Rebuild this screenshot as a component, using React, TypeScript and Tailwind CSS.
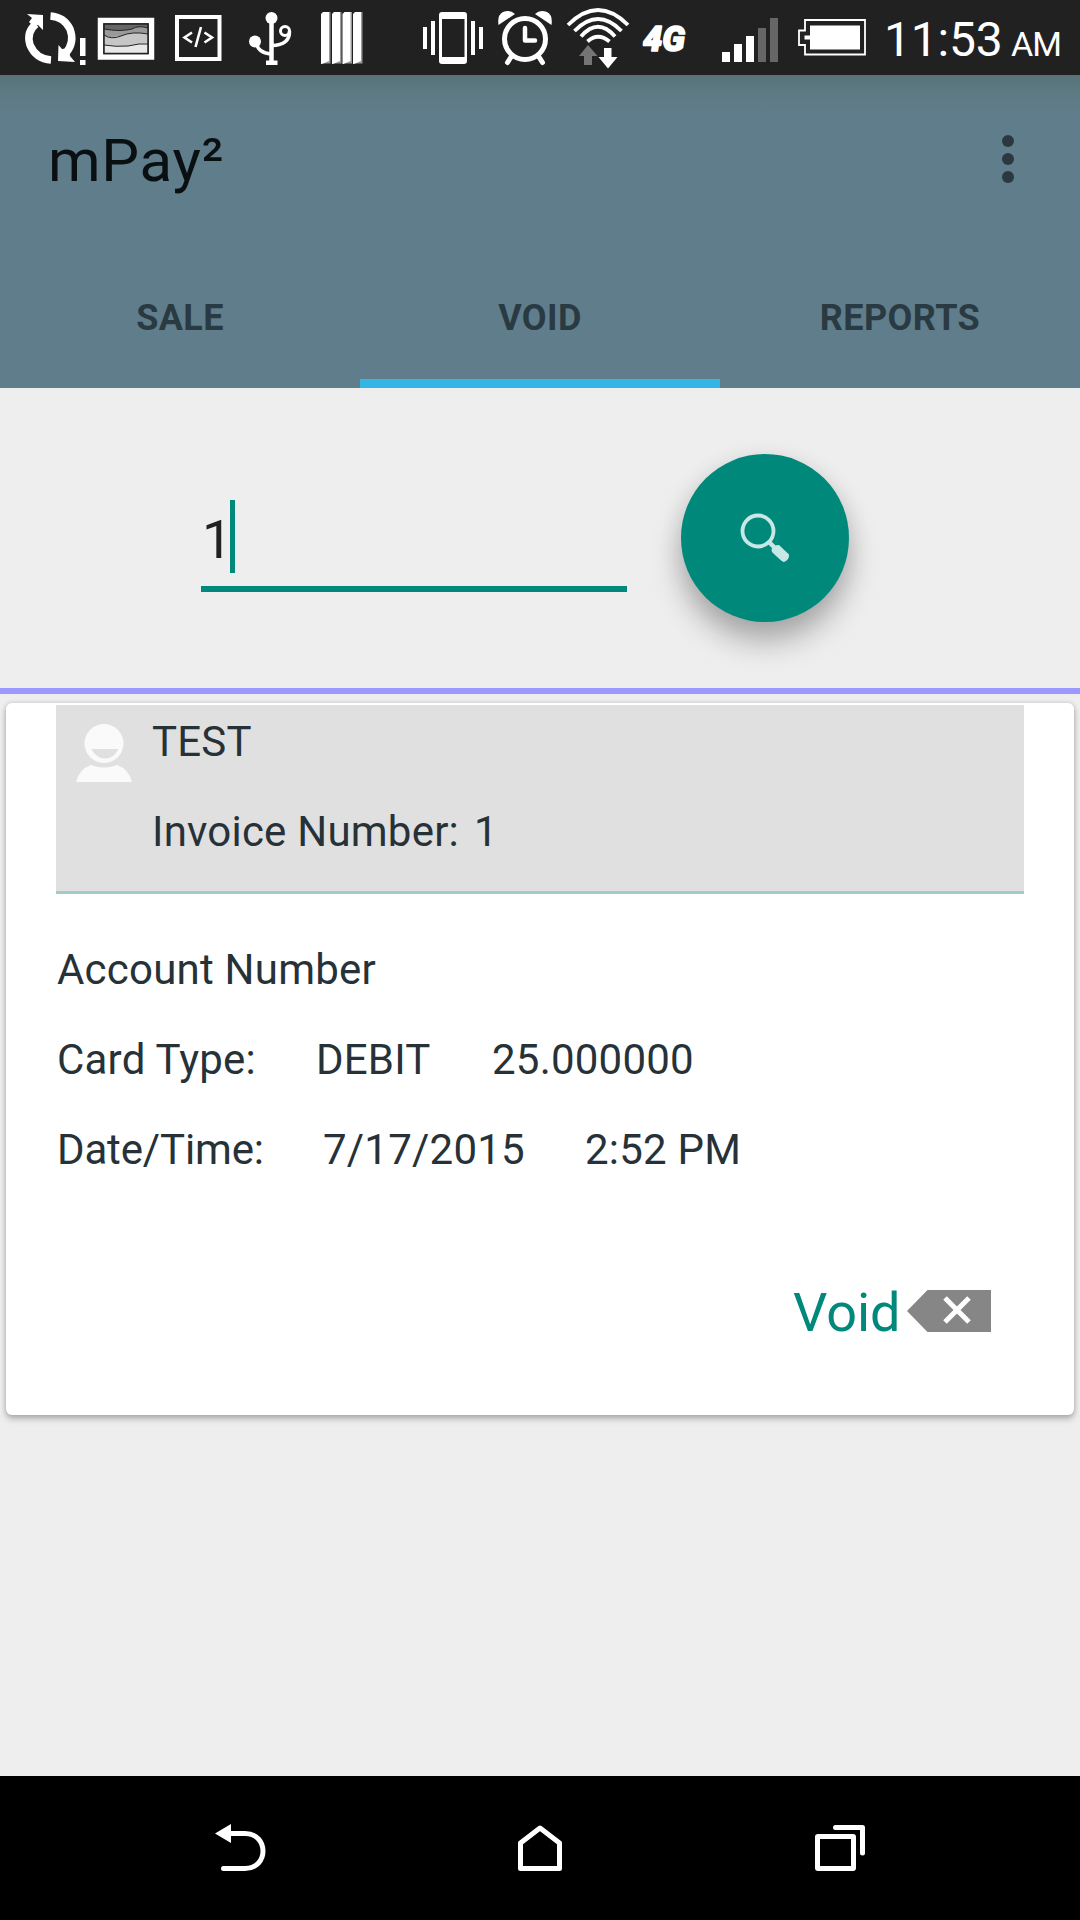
import React from "react";

type GlyphProps = { x: number; w: number; children: React.ReactNode };

/* One slot of the status bar; drawings use the bar's own coordinates. */
function Slot({ x, w, children }: GlyphProps) {
  return (
    <svg className="h-[75px] shrink-0" width={w} height={75} viewBox={`${x} 0 ${w} 75`} fill="none">
      {children}
    </svg>
  );
}

function StatusBar() {
  return (
    <div className="flex h-[75px] w-full bg-[#212121]">
      <Slot x={0} w={92}>
        <path d="M36 24 Q26 32 30 45 Q36 59 51 60" stroke="#fff" strokeWidth="7.5" />
        <path d="M27 14 L43 15 L43 30 L38 25 L33 26 L29 22 L32 18 Z" fill="#fff" />
        <path d="M50.500 16 Q64 17 70 29 Q75 42 66 53" stroke="#fff" strokeWidth="7.5" />
        <path d="M58.500 45 L62 49 L69 48 L70 56 L75 62 L58 61 Z" fill="#fff" />
        <path d="M80 38 H85.500 V56 H80 Z M80 60 H85.500 V65 H80 Z" fill="#fff" />
      </Slot>
      <Slot x={92} w={76}>
        <rect x="100.500" y="20.500" width="51" height="36.500" stroke="#fff" strokeWidth="5.500" />
        <rect x="104" y="24" width="44" height="29.500" fill="#e8e8e8" />
        <path d="M104 24 H148 V28 Q138 25 132 29 Q120 32 104 29 Z" fill="#666" />
        <path d="M104 29 Q120 32 132 29 Q138 25 148 28 V34 Q132 32 121 36 Q110 38 104 36 Z" fill="#999" />
        <path d="M104 36 Q112 39 121 36 Q132 31 148 34 V43 Q136 44 128 46 Q116 46 104 45 Z" fill="#c6c6c6" />
        <path d="M104 29 Q120 32 132 29 Q138 25 148 28 M104 35 Q111 40 121 36 Q132 31 148 34 M104 45 Q116 47 128 46 Q140 43 148 44" stroke="#222" strokeWidth="1" />
        <rect x="104" y="24" width="44" height="29.500" stroke="#222" strokeWidth="1.500" />
      </Slot>
      <Slot x={168} w={66}>
        <rect x="177" y="17" width="42.500" height="42" stroke="#fff" strokeWidth="4" />
        <path d="M192 32.500 L184.500 37.500 L192 42.500 M204.500 32.500 L212 37.500 L204.500 42.500 M201 27 L195.500 47" stroke="#fff" strokeWidth="2.600" />
      </Slot>
      <Slot x={234} w={70}>
        <circle cx="271.500" cy="18" r="6" fill="#fff" />
        <circle cx="255" cy="41.500" r="6" fill="#fff" />
        <circle cx="285" cy="31" r="4.500" stroke="#fff" strokeWidth="3" />
        <path d="M271.500 20 V61" stroke="#fff" strokeWidth="4.500" />
        <path d="M256.500 43 Q258 53 271 54 M289.500 31 Q290 45 272 45.500" stroke="#fff" strokeWidth="3.500" />
        <path d="M266 60.500 H277.500 V65 H266 Z" fill="#fff" />
      </Slot>
      <Slot x={304} w={96}>
        {[321, 332, 342.5, 353].map((x) => (
          <g key={x}>
            <path d={`M${x + 2} 12 H${x + 9.5} V63.500 H${x + 2} Z`} fill="#999" />
            <path d={`M${x} 14 L${x + 2} 12 H${x + 8} V61 L${x + 1} 64 H${x} Z`} fill="#fff" />
          </g>
        ))}
      </Slot>
      <Slot x={400} w={90}>
        <path d="M423 27 H427 V49 H423 Z M431 21 H435 V55 H431 Z M471 21 H475 V55 H471 Z M479 27 H483 V49 H479 Z" fill="#fff" />
        <path fillRule="evenodd" d="M442 12 H464 Q467 12 467 15 V61 Q467 64 464 64 H442 Q439 64 439 61 V15 Q439 12 442 12 Z M442 19 V57 H464.500 V19 Z" fill="#fff" />
      </Slot>
      <Slot x={490} w={70}>
        <circle cx="525" cy="39" r="20.500" stroke="#fff" strokeWidth="5" />
        <path d="M498.500 25 Q497 15 503 12 Q510 9 515 14 Z M551.500 25 Q553 15 547 12 Q540 9 535 14 Z" fill="#fff" />
        <path d="M525 28 V40.500 H535" stroke="#fff" strokeWidth="4.500" strokeLinecap="round" strokeLinejoin="round" />
        <path d="M511 57 L507.500 62.500 M539 57 L542.500 62.500" stroke="#fff" strokeWidth="5" strokeLinecap="round" />
      </Slot>
      <Slot x={560} w={75}>
        <path d="M568 25 Q598 -5 628 25 M574.500 31 Q598 7 621.500 31 M581 36.500 Q598 17 615 36.500 M587.500 41.500 Q598 32 609.500 41.500" stroke="#fff" strokeWidth="3.800" />
        <path d="M588 45 L597.500 56 H592 V65 H584 V56 H579 Z" fill="#757575" />
        <path d="M604 48 H611.500 V57 H617.500 L608 68.500 L598.500 57 H604 Z" fill="#fff" />
      </Slot>
      <Slot x={635} w={75}>
        <text x="643" y="50.500" textLength="42" lengthAdjust="spacingAndGlyphs" fontSize="35" fontStyle="italic" fontWeight="900" fill="#fff" stroke="#fff" strokeWidth="1.600" strokeLinejoin="round" fontFamily="Roboto, sans-serif">4G</text>
      </Slot>
      <Slot x={710} w={80}>
        <path d="M722 52 H730 V62 H722 Z M734 44 H742 V62 H734 Z M746 36 H754 V62 H746 Z" fill="#fff" />
        <path d="M758 28 H766 V62 H758 Z M770 18 H778 V62 H770 Z" fill="#666" />
      </Slot>
      <Slot x={790} w={92}>
        <path d="M805 20 H865 V54.500 H805 V45 H799 V30.500 H805 Z" stroke="#fff" strokeWidth="1.800" />
        <path d="M810 25.500 H860 V49.500 H810 V39.500 H804.500 V35.500 H810 Z" fill="#fff" />
      </Slot>
      <div className="flex h-[75px] items-baseline pl-[2px] text-white">
        <span className="w-[127px] whitespace-nowrap pt-[10px] text-[48px] leading-[60px] tracking-[-0.2px]">11:53</span>
        <span className="text-[34px] font-normal leading-none tracking-[-1px]">AM</span>
      </div>
    </div>
  );
}

function Header() {
  const tabs = ["SALE", "VOID", "REPORTS"];
  return (
    <header className="flex h-[313px] flex-col bg-[linear-gradient(#577278_0px,#5d7a84_18px,#607d8b_40px)]">
      <div className="flex h-[168px] items-center justify-between pl-12 pr-[66px]">
        <h1 className="pt-[3px] text-[60px] leading-[70px] tracking-[0.7px] text-[#0a0f12]">mPay²</h1>
        <div className="flex flex-col gap-[6px]">
          <span className="size-3 rounded-full bg-[#2b383f]" />
          <span className="size-3 rounded-full bg-[#2b383f]" />
          <span className="size-3 rounded-full bg-[#2b383f]" />
        </div>
      </div>
      <nav className="grid grow grid-cols-3">
        {tabs.map((t) => (
          <div
            key={t}
            className={
              "flex items-center justify-center border-b-[9px] pt-[13px] text-[36px] font-bold leading-none tracking-[0.4px] text-[#2a3a43] " +
              (t === "VOID" ? "border-[#33b5e5]" : "border-transparent")
            }
          >
            {t}
          </div>
        ))}
      </nav>
    </header>
  );
}

function SearchPanel() {
  return (
    <section className="flex h-[306px] items-start border-b-[6px] border-[#9999ff] pl-[201px] pt-[66px]">
      <div className="mt-[46px] flex h-[92px] w-[426px] items-start border-b-[6px] border-[#00897b]">
        <span className="w-[29px] pl-px pt-[3px] text-[54px] leading-[74px] text-[#212121]">1</span>
        <span className="h-[73px] w-[5px] bg-[#00897b]" />
      </div>
      <button className="ml-[54px] size-[168px] rounded-full bg-[#00897b] shadow-[0_20px_30px_rgba(0,0,0,0.27),0_4px_24px_rgba(0,0,0,0.08)]">
        <svg className="block" width="168" height="168" viewBox="681 454 168 168" fill="none">
          <circle cx="758" cy="531" r="15.500" stroke="#c8e8e6" strokeWidth="3.800" />
          <path d="M769 542 L774 547" stroke="#c8e8e6" strokeWidth="4.500" />
          <path d="M771.500 550 Q772 545 779 545 L789 554.500 Q789.500 560 784 562 Q782 562 772 552 Z" fill="#c8e8e6" />
        </svg>
      </button>
    </section>
  );
}

function PaymentCard() {
  return (
    <article className="mx-[6px] mt-[9px] flex h-[712px] flex-col rounded-[6px] bg-white px-[50px] pt-[2px] text-[42px] leading-[49px] tracking-[0.22px] text-[#263238] shadow-[0_4px_6px_rgba(0,0,0,0.24),0_0_5px_rgba(0,0,0,0.16)]">
      <div className="flex h-[189px] border-b-[3px] border-[#9fccc9] bg-[#e0e0e0]">
        <svg className="mt-[19px] ml-[20px] shrink-0" width="56" height="59" viewBox="76 724 56 59">
          <circle cx="104" cy="743.500" r="19.500" fill="#fafafa" />
          <path d="M91.500 749 H118.500 Q114 758.500 105 758.500 Q96 758.500 91.500 749 Z" fill="#e0e0e0" />
          <path d="M76 782 Q79 769 91 765 Q104 770 117 765 Q129 769 132 782 Z" fill="#fafafa" />
        </svg>
        <div className="ml-[20px] flex flex-col gap-[41px] pt-[12px]">
          <span>TEST</span>
          <span className="flex whitespace-pre"><span className="w-[322px]">Invoice Number:</span><span>1</span></span>
        </div>
      </div>
      <div className="mt-[51px] flex flex-col gap-[41px] pl-px">
        <div>Account Number</div>
        <div className="flex whitespace-nowrap">
          <span className="w-[259px]">Card Type:</span>
          <span className="w-[176px]">DEBIT</span>
          <span>25.000000</span>
        </div>
        <div className="flex whitespace-nowrap">
          <span className="w-[266px] tracking-[-0.15px]">Date/Time:</span>
          <span className="w-[262px]">7/17/2015</span>
          <span>2:52 PM</span>
        </div>
      </div>
      <div className="mt-[99px] flex items-center justify-end pr-[33px]">
        <span className="w-[114px] pt-[3px] text-[54px] leading-[73px] tracking-normal text-[#00897b]">Void</span>
        <svg width="84" height="42" viewBox="907 1290 84 42" fill="none">
          <path d="M927.500 1290 H991 V1332 H927.500 L907 1311 Z" fill="#868686" />
          <path d="M945 1298 L969 1322 M969 1298 L945 1322" stroke="#fff" strokeWidth="5" />
        </svg>
      </div>
    </article>
  );
}

function NavBar() {
  return (
    <footer className="grid h-[144px] w-full grid-cols-[390px_300px_390px] bg-black">
      <svg width="390" height="144" viewBox="0 1776 390 144" fill="none">
        <path d="M215 1833.500 L231 1824 V1843 Z" fill="#fff" />
        <path d="M229 1833.500 H245 C269 1833.500 269 1868.500 245 1868.500 H223.500" stroke="#fff" strokeWidth="5" strokeLinecap="round" />
      </svg>
      <svg width="300" height="144" viewBox="390 1776 300 144" fill="none">
        <path d="M520.500 1868.500 V1843 L540 1828 L559.500 1843 V1868.500 Z" stroke="#fff" strokeWidth="5" strokeLinejoin="round" />
      </svg>
      <svg width="390" height="144" viewBox="690 1776 390 144" fill="none">
        <rect x="817.500" y="1836.500" width="36" height="32" rx="0.500" stroke="#fff" strokeWidth="5" strokeLinejoin="round" />
        <path d="M835.500 1827.500 H862.500 V1853" stroke="#fff" strokeWidth="5" strokeLinecap="round" strokeLinejoin="round" />
      </svg>
    </footer>
  );
}

export default function App() {
  return (
    <div className="flex h-[1920px] w-[1080px] flex-col overflow-hidden bg-[#eeeeee] font-[Roboto,sans-serif]">
      <StatusBar />
      <Header />
      <main className="grow">
        <SearchPanel />
        <PaymentCard />
      </main>
      <NavBar />
    </div>
  );
}
